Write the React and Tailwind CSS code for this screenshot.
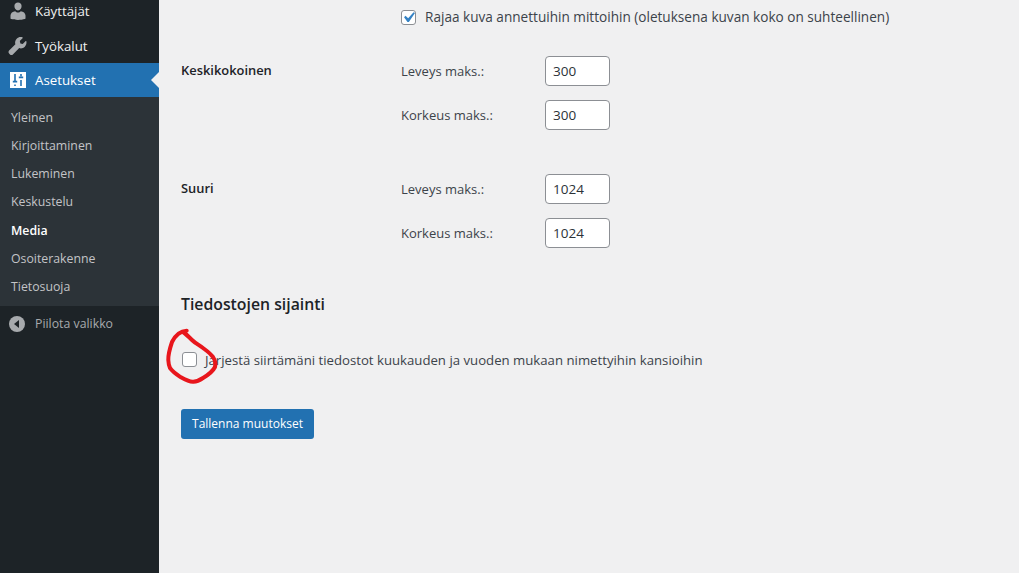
import React from 'react';

const font = { fontFamily: '"Open Sans", sans-serif' };

const submenu = [
  { label: 'Yleinen' },
  { label: 'Kirjoittaminen' },
  { label: 'Lukeminen' },
  { label: 'Keskustelu' },
  { label: 'Media', current: true },
  { label: 'Osoiterakenne' },
  { label: 'Tietosuoja' },
];

const UserIcon = () => (
  <svg viewBox="0 0 20 20" className="w-[20px] h-[20px] fill-[#a7aaad]">
    <path d="M10 9.500c2.200 0 3.600-2 3.600-4.400C13.600 2.900 12.100 1.500 10 1.500S6.400 2.900 6.400 5.100C6.400 7.500 7.800 9.500 10 9.500zM12.800 10.200c-.7.900-1.700 1.400-2.800 1.400s-2.100-.5-2.800-1.400C4.700 10.600 2.500 12 2.500 14.600v2.900c0 .3.300.5.600.6 1.900.5 4.400.9 6.900.9s5-.4 6.900-.9c.3-.1.600-.3.600-.6v-2.900c0-2.600-2.200-4-4.700-4.400z" />
  </svg>
);

const WrenchIcon = () => (
  <svg viewBox="0 0 20 20" className="w-[20px] h-[20px] fill-[#a7aaad]">
    <path d="M18.300 5.100c-.1-.2-.4-.3-.6-.1l-3 2.900-2.300-.5-.6-2.300 3-3c.2-.2.100-.5-.1-.6-2-.8-4.400-.4-6 1.200-1.500 1.500-2 3.700-1.300 5.600l-6.300 6.300c-.8.800-.8 2.100 0 2.900l.9.900c.8.800 2.100.8 2.900 0l6.300-6.300c1.900.7 4.100.2 5.600-1.300 1.600-1.600 2-4 1.500-5.700z" />
  </svg>
);

const SettingsIcon = () => (
  <svg viewBox="0 0 16 16" className="w-[16px] h-[16px]">
    <rect width="16" height="16" fill="#ffffff" />
    <path d="M5 2v7M5 12.500V14M11 2v2.500M11 8v6" stroke="#2271b1" strokeWidth="1.600" fill="none" />
    <path d="M2.800 9.600h4.400M8.800 5.400h4.400" stroke="#2271b1" strokeWidth="1.800" fill="none" />
  </svg>
);

const CollapseIcon = () => (
  <svg viewBox="0 0 16 16" className="w-[16px] h-[16px]">
    <circle cx="8" cy="8" r="8" fill="#a7aaad" />
    <path d="M10 4v8L5 8z" fill="#1d2327" />
  </svg>
);

const Checkbox = ({ checked }) => (
  <span className="w-[15px] h-[15px] shrink-0 flex items-center justify-center rounded-[3px] border border-[#8c8f94] bg-white">
    {checked && (
      <svg viewBox="0 0 20 20" className="w-[21px] h-[21px] shrink-0 fill-[#3582c4]">
        <path d="M14.830 4.890l1.340.94-5.810 8.380H9.020L5.780 9.670l1.340-1.250 2.570 2.400z" />
      </svg>
    )}
  </span>
);

const SizeInput = ({ label, value }) => (
  <div className="flex items-center h-[30px]">
    <span className="w-[144px] pt-[1px] text-[13px] text-[#3c434a]">{label}</span>
    <span className="w-[65px] h-[30px] flex items-center pl-[7px] bg-white border border-[#8c8f94] rounded-[4px] text-[13.500px] text-[#2c3338]">
      {value}
    </span>
  </div>
);

const SizeRow = ({ title, width, height, className }) => (
  <div className={`flex ${className}`}>
    <div className="w-[220px] pt-[5px] text-[12.900px] leading-[18px] font-semibold text-[#1d2327]">{title}</div>
    <div className="flex flex-col gap-[14px]">
      <SizeInput label="Leveys maks.:" value={width} />
      <SizeInput label="Korkeus maks.:" value={height} />
    </div>
  </div>
);

export default function App() {
  return (
    <div className="relative flex w-[1019px] h-[573px] overflow-hidden bg-[#f0f0f1]" style={font}>
      {/* Admin menu */}
      <aside className="w-[159px] h-full shrink-0 bg-[#1d2327]">
        <div className="flex items-center h-[34px] mt-[-6px] pl-[8px] gap-[7px] text-[13.300px] text-[#f0f0f1]">
          <UserIcon />
          <span className="pt-[2px]">Käyttäjät</span>
        </div>
        <div className="flex items-center h-[34px] mt-[1px] pl-[8px] gap-[7px] text-[13.300px] text-[#f0f0f1]">
          <WrenchIcon />
          <span className="pt-[2px]">Työkalut</span>
        </div>
        <div className="relative flex items-center h-[34px] pl-[10px] gap-[9px] text-[13.300px] text-white bg-[#2271b1]">
          <SettingsIcon />
          <span className="pt-[2px]">Asetukset</span>
          <span className="absolute right-0 top-[9px] border-y-[8px] border-y-transparent border-r-[8px] border-r-[#f0f0f1]" />
        </div>
        <div className="flex flex-col h-[209px] pt-[7px] bg-[#2c3338] text-[12.300px]">
          {submenu.map((item) => (
            <div
              key={item.label}
              className={`flex items-center h-[28.200px] pl-[11px] ${item.current ? 'font-semibold text-white' : 'text-[#c3c4c7]'}`}
            >
              {item.label}
            </div>
          ))}
        </div>
        <div className="flex items-center mt-[9px] pl-[9px] gap-[10px] h-[18px] text-[12.300px] text-[#a7aaad]">
          <CollapseIcon />
          <span>Piilota valikko</span>
        </div>
      </aside>

      {/* Settings form */}
      <main className="flex-1 pl-[22px]">
        <div className="flex items-center h-[15px] mt-[10px] ml-[220px] gap-[9px] text-[13.600px] text-[#3c434a]">
          <Checkbox checked />
          <span>Rajaa kuva annettuihin mittoihin (oletuksena kuvan koko on suhteellinen)</span>
        </div>
        <SizeRow title="Keskikokoinen" width="300" height="300" className="mt-[31px]" />
        <SizeRow title="Suuri" width="1024" height="1024" className="mt-[44px]" />
        <h2 className="mt-[45px] text-[15.800px] leading-[22px] font-semibold text-[#1d2327]">Tiedostojen sijainti</h2>
        <div className="flex items-center h-[15px] mt-[37px] ml-[1px] gap-[8px] text-[13.200px] text-[#3c434a]">
          <Checkbox />
          <span className="pt-[2px]">Järjestä siirtämäni tiedostot kuukauden ja vuoden mukaan nimettyihin kansioihin</span>
        </div>
        <button className="block w-[133px] h-[30px] mt-[42px] rounded-[3px] bg-[#2271b1] text-[12px] font-medium text-white">
          Tallenna muutokset
        </button>
      </main>

      {/* Hand-drawn annotation */}
      <svg viewBox="0 0 60 60" className="absolute left-[165px] top-[328px] w-[60px] h-[60px] fill-none stroke-[#e8161c]">
        <path
          strokeWidth="4"
          strokeLinecap="round"
          strokeLinejoin="round"
          d="M21.700 2.700C15 3 10 8 7 14C5 20 3 26 3.300 32C3.500 36 4 38 5 40C8 44 11 46 15 48.700C19 51 24 54 28.300 53.700C32 53.500 35 52 38 50C43 47 48 43 50 39C51 35 50 32 48 29C45 25 42 23 38 20C34 17 30 15 27 12C24 9 21 6 18 4"
        />
      </svg>
    </div>
  );
}
